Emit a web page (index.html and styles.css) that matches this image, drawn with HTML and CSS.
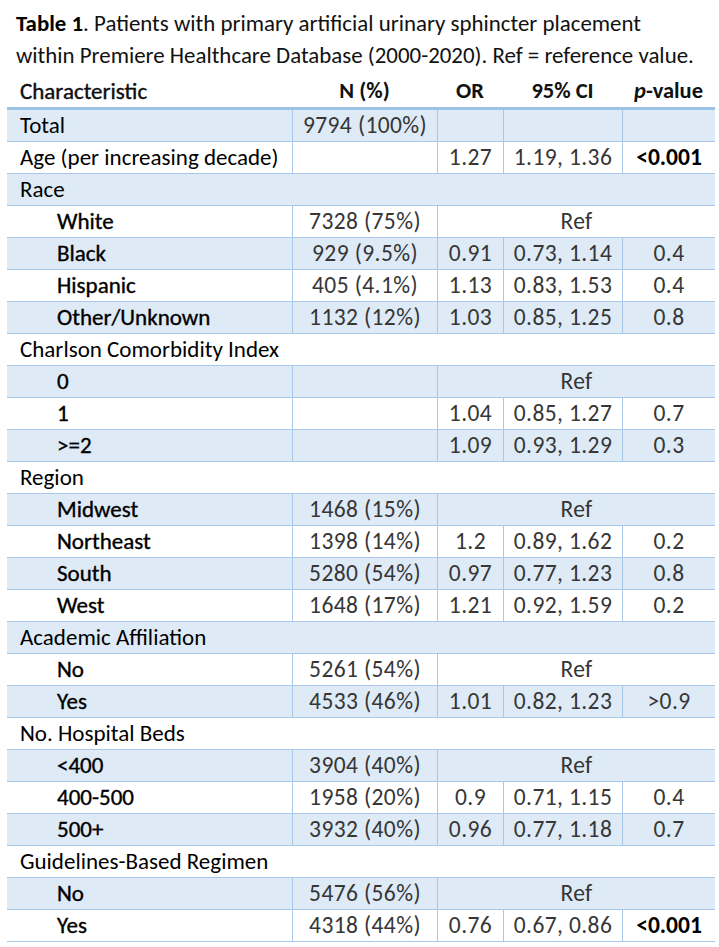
FILE: index.html
```html
<!DOCTYPE html>
<html lang="en">
<head>
<meta charset="utf-8">
<title>Table 1</title>
<link rel="stylesheet" href="styles.css">
</head>
<body>
<div class="page">
  <p class="caption"><b>Table 1</b>. Patients with primary artificial urinary sphincter placement<br>within Premiere Healthcare Database (2000-2020). Ref = reference value.</p>
  <table class="tbl">
    <colgroup>
      <col class="c1"><col class="c2"><col class="c3"><col class="c4"><col class="c5">
    </colgroup>
    <thead>
      <tr>
        <th class="lab">Characteristic</th>
        <th>N (%)</th>
        <th>OR</th>
        <th>95% CI</th>
        <th><i>p</i>-value</th>
      </tr>
    </thead>
    <tbody>
      <tr><td class="lab">Total</td><td class="v">9794 (100%)</td><td class="v"></td><td class="v"></td><td class="v"></td></tr>
      <tr><td class="lab">Age (per increasing decade)</td><td class="v"></td><td class="v">1.27</td><td class="v">1.19, 1.36</td><td class="v sig">&lt;0.001</td></tr>
      <tr><td class="lab" colspan="5">Race</td></tr>
      <tr><td class="sub">White</td><td class="v">7328 (75%)</td><td class="v" colspan="3">Ref</td></tr>
      <tr><td class="sub">Black</td><td class="v">929 (9.5%)</td><td class="v">0.91</td><td class="v">0.73, 1.14</td><td class="v">0.4</td></tr>
      <tr><td class="sub">Hispanic</td><td class="v">405 (4.1%)</td><td class="v">1.13</td><td class="v">0.83, 1.53</td><td class="v">0.4</td></tr>
      <tr><td class="sub">Other/Unknown</td><td class="v">1132 (12%)</td><td class="v">1.03</td><td class="v">0.85, 1.25</td><td class="v">0.8</td></tr>
      <tr><td class="lab" colspan="5">Charlson Comorbidity Index</td></tr>
      <tr><td class="sub">0</td><td class="v"></td><td class="v" colspan="3">Ref</td></tr>
      <tr><td class="sub">1</td><td class="v"></td><td class="v">1.04</td><td class="v">0.85, 1.27</td><td class="v">0.7</td></tr>
      <tr><td class="sub">&gt;=2</td><td class="v"></td><td class="v">1.09</td><td class="v">0.93, 1.29</td><td class="v">0.3</td></tr>
      <tr><td class="lab" colspan="5">Region</td></tr>
      <tr><td class="sub">Midwest</td><td class="v">1468 (15%)</td><td class="v" colspan="3">Ref</td></tr>
      <tr><td class="sub">Northeast</td><td class="v">1398 (14%)</td><td class="v">1.2</td><td class="v">0.89, 1.62</td><td class="v">0.2</td></tr>
      <tr><td class="sub">South</td><td class="v">5280 (54%)</td><td class="v">0.97</td><td class="v">0.77, 1.23</td><td class="v">0.8</td></tr>
      <tr><td class="sub">West</td><td class="v">1648 (17%)</td><td class="v">1.21</td><td class="v">0.92, 1.59</td><td class="v">0.2</td></tr>
      <tr><td class="lab" colspan="5">Academic Affiliation</td></tr>
      <tr><td class="sub">No</td><td class="v">5261 (54%)</td><td class="v" colspan="3">Ref</td></tr>
      <tr><td class="sub">Yes</td><td class="v">4533 (46%)</td><td class="v">1.01</td><td class="v">0.82, 1.23</td><td class="v">&gt;0.9</td></tr>
      <tr><td class="lab" colspan="5">No. Hospital Beds</td></tr>
      <tr><td class="sub">&lt;400</td><td class="v">3904 (40%)</td><td class="v" colspan="3">Ref</td></tr>
      <tr><td class="sub">400-500</td><td class="v">1958 (20%)</td><td class="v">0.9</td><td class="v">0.71, 1.15</td><td class="v">0.4</td></tr>
      <tr><td class="sub">500+</td><td class="v">3932 (40%)</td><td class="v">0.96</td><td class="v">0.77, 1.18</td><td class="v">0.7</td></tr>
      <tr><td class="lab" colspan="5">Guidelines-Based Regimen</td></tr>
      <tr><td class="sub">No</td><td class="v">5476 (56%)</td><td class="v" colspan="3">Ref</td></tr>
      <tr><td class="sub">Yes</td><td class="v">4318 (44%)</td><td class="v">0.76</td><td class="v">0.67, 0.86</td><td class="v sig">&lt;0.001</td></tr>
    </tbody>
  </table>
</div>
</body>
</html>
```

FILE: styles.css
```css
html, body {
  margin: 0;
  padding: 0;
  background: #ffffff;
}

.page {
  width: 719px;
  padding: 7px 4px 0 7px;
  box-sizing: border-box;
  font-family: "Carlito", "Lato", "Liberation Sans", sans-serif;
  font-size: 23px;
  color: #000000;
}

.caption {
  margin: 0;
  padding-left: 9px;
  font-size: 22.9px;
  line-height: 32px;
  white-space: nowrap;
  color: #111111;
}

.caption b {
  font-weight: 700;
  color: #000000;
}

.tbl {
  width: 708px;
  border-collapse: separate;
  border-spacing: 0;
  table-layout: fixed;
}

.c1 { width: 285px; }
.c2 { width: 145px; }
.c3 { width: 66px; }
.c4 { width: 119px; }
.c5 { width: 93px; }

.tbl th {
  font-size: 22.5px;
  font-weight: 700;
  text-align: center;
  padding: 4px 0 0 0;
  line-height: 32px;
  border-bottom: 3px solid #9cc2e5;
  white-space: nowrap;
  color: #111111;
}

.tbl th.lab {
  text-align: left;
  padding-left: 13px;
  font-size: 23px;
  font-weight: 400;
  -webkit-text-stroke: 0.35px #000000;
}

.tbl th i {
  font-style: italic;
}

.tbl td {
  padding: 0;
  line-height: 31px;
  height: 31px;
  border-top: 1px solid #a9c8e8;
  white-space: nowrap;
}

.tbl tbody tr:first-child td {
  border-top: none;
}

.tbl tbody tr:last-child td {
  border-bottom: 1px solid #a9c8e8;
}

.tbl tbody tr:nth-child(odd) td {
  background: #deeaf6;
}

.tbl td.lab {
  padding-left: 13px;
  text-align: left;
  color: #000000;
}

.tbl td.sub {
  padding-left: 50px;
  text-align: left;
  color: #000000;
  -webkit-text-stroke: 0.35px #000000;
}

.tbl td.v {
  text-align: center;
  font-size: 23.5px;
  color: #363636;
  letter-spacing: 0.4px;
  border-left: 1px solid #a9c8e8;
}

.tbl td.sig {
  color: #000000;
  font-weight: 700;
  letter-spacing: 0;
}
```
